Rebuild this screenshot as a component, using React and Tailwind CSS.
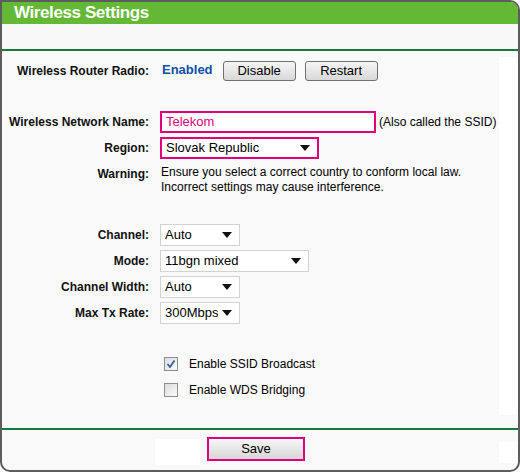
import React from 'react';

const font = { fontFamily: '"Liberation Sans", Arial, sans-serif' };

const Arrow = () => (
  <svg width="10" height="6" viewBox="0 0 10 6" className="shrink-0">
    <path d="M0 0 H10 L5 6 Z" fill="#111" />
  </svg>
);

const Select = ({ value, width, pink }) => (
  <div
    className={`flex items-center justify-between bg-white h-[22px] pl-[4px] pr-[7px] text-[13px] text-black ${
      pink ? 'border-2 border-[#e2007a]' : 'border border-[#d2d2d2]'
    } ${width}`}
  >
    <span className="overflow-hidden whitespace-nowrap">{value}</span>
    <Arrow />
  </div>
);

const Btn = ({ children, className = '' }) => (
  <div
    className={`flex items-center justify-center h-[20px] border border-[#707070] rounded-[3px] bg-gradient-to-b from-[#f6f6f6] to-[#d8d8d8] text-[13px] text-black ${className}`}
  >
    {children}
  </div>
);

const Label = ({ children }) => (
  <div className="w-[147px] shrink-0 text-right font-bold text-[12px] text-[#111]">{children}</div>
);

const Checkbox = ({ checked }) => (
  <div className="w-[14px] h-[14px] border border-[#8e8e8e] bg-gradient-to-br from-[#dcdcdc] to-[#fbfbfb] flex items-center justify-center">
    {checked && (
      <svg width="10" height="10" viewBox="0 0 10 10">
        <path d="M1.5 5 L4 8 L8.5 1.5" fill="none" stroke="#3c5a9c" strokeWidth="1.8" />
      </svg>
    )}
  </div>
);

export default function App() {
  return (
    <div style={font} className="w-[520px] h-[472px] bg-white">
      <div className="w-[520px] h-[472px] border-2 border-[#5c5c5c] rounded-tr-[10px] rounded-b-[10px] overflow-hidden flex flex-col bg-[#f9f9f9]">
        <div className="h-[22px] bg-[#63b835] flex items-center pl-[12px]">
          <span className="text-white font-bold text-[17px] tracking-[-0.4px]">Wireless Settings</span>
        </div>
        <div className="h-[27px] bg-[#f8f8f8] border-b-2 border-[#19773a]" />

        <div className="flex flex-1">
          <div className="flex-1 flex flex-col">
            {/* radio */}
            <div className="flex items-center mt-[10px] h-[20px]">
              <Label>Wireless Router Radio:</Label>
              <span className="ml-[13px] font-bold text-[13px] text-[#0f4fa6] -mt-[3px]">Enabled</span>
              <Btn className="ml-[10px] w-[73px]">Disable</Btn>
              <Btn className="ml-[9px] w-[73px]">Restart</Btn>
            </div>

            {/* ssid */}
            <div className="flex items-center mt-[30px] h-[22px]">
              <Label>Wireless Network Name:</Label>
              <div className="ml-[11px] w-[216px] h-[22px] border-2 border-[#e2007a] bg-white pl-[4px] flex items-center text-[13px] text-[#e2007a]">
                Telekom
              </div>
              <span className="ml-[3px] text-[12px] text-black">(Also called the SSID)</span>
            </div>

            <div className="flex items-center mt-[4px] h-[22px]">
              <Label>Region:</Label>
              <div className="ml-[11px]">
                <Select value="Slovak Republic" width="w-[159px]" pink />
              </div>
            </div>

            <div className="flex mt-[6px]">
              <Label>Warning:</Label>
              <div className="ml-[12px] text-[12px] leading-[15px] text-black">
                Ensure you select a correct country to conform local law.
                <br />
                Incorrect settings may cause interference.
              </div>
            </div>

            {[
              ['Channel:', 'Auto', 'w-[80px]', 'mt-[29px]'],
              ['Mode:', '11bgn mixed', 'w-[149px]', 'mt-[4px]'],
              ['Channel Width:', 'Auto', 'w-[80px]', 'mt-[4px]'],
              ['Max Tx Rate:', '300Mbps', 'w-[80px]', 'mt-[4px]'],
            ].map(([l, v, w, m]) => (
              <div key={l} className={`flex items-center h-[22px] ${m}`}>
                <Label>{l}</Label>
                <div className="ml-[11px]">
                  <Select value={v} width={w} />
                </div>
              </div>
            ))}

            <div className="flex items-center mt-[33px] ml-[162px] h-[14px]">
              <Checkbox checked />
              <span className="ml-[11px] text-[12px] text-black">Enable SSID Broadcast</span>
            </div>
            <div className="flex items-center mt-[12px] ml-[162px] h-[14px]">
              <Checkbox />
              <span className="ml-[11px] text-[12px] text-black">Enable WDS Bridging</span>
            </div>
          </div>
          <div className="w-[19px] mt-[6px] h-[358px] bg-white" />
        </div>

        <div className="h-[2px] bg-[#19773a] mt-[4px]" />
        <div className="h-[40px] flex items-start">
          <div className="ml-[153px] mt-[9px] w-[45px] h-[26px] bg-white" />
          <div className="ml-[7px] mt-[7px] border-2 border-[#e2007a]">
            <Btn className="w-[94px] h-[18px] border-0 rounded-none">Save</Btn>
          </div>
          <div className="ml-auto mt-[12px] w-[19px] h-[21px] bg-white" />
        </div>
      </div>
    </div>
  );
}
